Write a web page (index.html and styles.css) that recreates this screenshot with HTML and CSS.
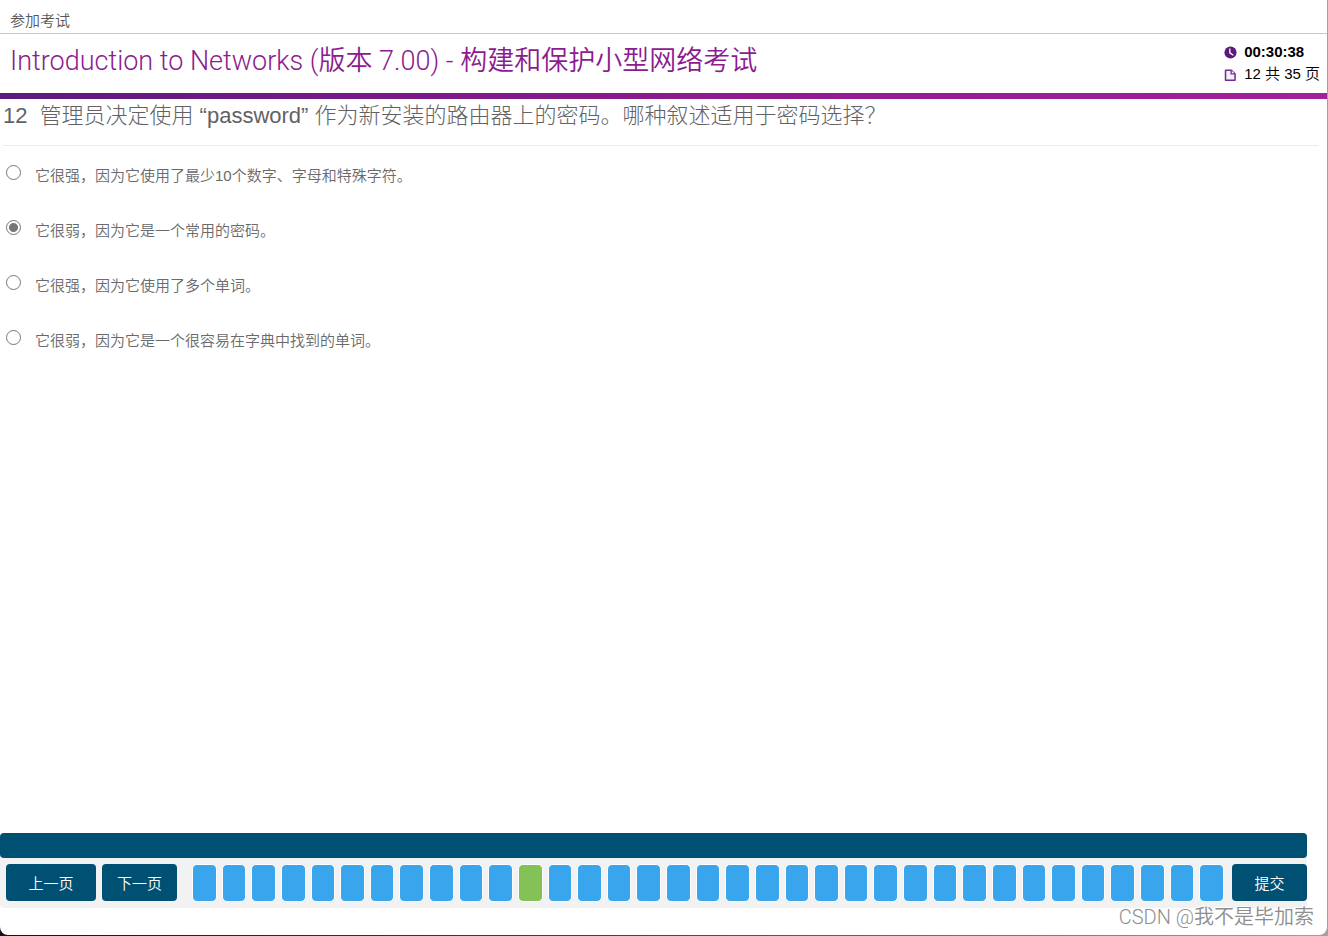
FILE: index.html
```
<!DOCTYPE html>
<html lang="zh-CN">
<head>
<meta charset="utf-8">
<title>参加考试</title>
<link rel="stylesheet" href="styles.css">
</head>
<body>
<div class="window">
  <div class="topbar">参加考试</div>
  <header class="header">
    <h1 class="title">Introduction to Networks (版本 7.00) - 构建和保护小型网络考试</h1>
    <div class="status">
      <div class="status-row status-time">
        <svg class="icon" viewBox="0 0 12 12" aria-hidden="true"><circle cx="6" cy="6" r="5.6" fill="#5c1a78"/><path d="M5.4 2.2V6.3L8.6 8.6" fill="none" stroke="#fff" stroke-width="1.2"/></svg>
        <span>00:30:38</span>
      </div>
      <div class="status-row">
        <svg class="icon" viewBox="0 0 12 12" aria-hidden="true"><path d="M1.4 2H6.6L10.2 5.4V11.3H1.4Z" fill="#f4eef7" stroke="#752a92" stroke-width="1.4" stroke-linejoin="round"/><path d="M6.6 2V5.4H10.2" fill="#fff" stroke="#752a92" stroke-width="1.2"/></svg>
        <span>12 共 35 页</span>
      </div>
    </div>
  </header>
  <main class="main">
    <h2 class="question"><span class="number">12</span><span>管理员决定使用 “password” 作为新安装的路由器上的密码。哪种叙述适用于密码选择？</span></h2>
    <form class="options">
      <label class="option"><input class="radio" type="radio" name="answer"><span>它很强，因为它使用了最少10个数字、字母和特殊字符。</span></label>
      <label class="option"><input class="radio" type="radio" name="answer" checked><span>它很弱，因为它是一个常用的密码。</span></label>
      <label class="option"><input class="radio" type="radio" name="answer"><span>它很强，因为它使用了多个单词。</span></label>
      <label class="option"><input class="radio" type="radio" name="answer"><span>它很弱，因为它是一个很容易在字典中找到的单词。</span></label>
    </form>
  </main>
  <footer class="footer">
    <div class="strip"></div>
    <nav class="pager">
      <button class="button button-wide" type="button">上一页</button>
      <button class="button" type="button">下一页</button>
      <div class="pages" id="pages"></div>
      <button class="button" type="button">提交</button>
    </nav>
  </footer>
  <div class="watermark">CSDN @我不是毕加索</div>
</div>
<script src="pages.js"></script>
</body>
</html>
```
FILE: pages.js
```
const pages = document.getElementById("pages");
for (let n = 1; n <= 35; n++) {
  const page = document.createElement("button");
  page.type = "button";
  page.className = n === 12 ? "page page-current" : "page";
  page.setAttribute("aria-label", String(n));
  pages.append(page);
}
```
FILE: styles.css
```
* {
  box-sizing: border-box;
}

body {
  margin: 0;
  padding: 0 1px 1px 0;
  min-height: 100vh;
  display: flex;
  background: linear-gradient(90deg, #10131f 0, #4a4650 50%, #a99ca8 100%);
  font-family: "Liberation Sans", "Noto Sans CJK SC DemiLight", "Noto Sans CJK SC", sans-serif;
  font-size: 15px;
  color: #58585b;
}

.window {
  position: relative;
  flex: 1;
  display: flex;
  flex-direction: column;
  background: #fff;
  border-radius: 0 0 8px 8px;
}

.topbar {
  height: 34px;
  padding: 9px 10px 0;
  border-bottom: 1px solid #c8c8ca;
  line-height: 24px;
}

.header {
  display: flex;
  justify-content: space-between;
  align-items: flex-start;
  height: 65px;
  padding: 7px 7px 0 10px;
  border-bottom: 6px solid;
  border-image: linear-gradient(90deg, #5c1a7e, #8c1b8c 50%, #a3219b) 1;
}

.title {
  margin: 0;
  font-family: Roboto, "Noto Sans CJK SC DemiLight", "Noto Sans CJK SC", sans-serif;
  font-size: 27px;
  font-weight: 300;
  line-height: 40px;
  color: #8c1b90;
}

.status {
  color: #000;
}

.status-row {
  display: flex;
  align-items: center;
  gap: 7px;
  height: 22px;
  line-height: 22px;
}

.status-time {
  font-weight: 700;
}

.icon {
  width: 13px;
  height: 13px;
}

.main {
  flex: 1;
  padding: 0 9px 0 3px;
}

.question {
  display: flex;
  gap: 12px;
  margin: 0;
  height: 47px;
  border-bottom: 1px solid #ebebec;
  font-family: "Liberation Sans", "Noto Sans CJK SC Light", "Noto Sans CJK SC", sans-serif;
  font-size: 22px;
  font-weight: 300;
  line-height: 33px;
  color: #626265;
}

.options {
  display: flex;
  flex-direction: column;
  gap: 33px;
  padding: 19px 3px 0;
  color: #6a6a6d;
}

.option {
  display: flex;
  gap: 14px;
  line-height: 22px;
}

.radio {
  appearance: none;
  width: 15px;
  height: 15px;
  margin: 0;
  border: 1px solid #767676;
  border-radius: 50%;
  background: #fff;
}

.radio:checked {
  background: radial-gradient(circle, #767676 4px, #fff 5px);
}

.footer {
  margin: 0 20px 27px 0;
  border-radius: 4px;
  background: #f2f2f2;
}

.strip {
  height: 25px;
  border-radius: 4px;
  background: #005073;
}

.pager {
  display: flex;
  align-items: flex-start;
  gap: 6px;
  padding: 6px 0 6px 6px;
}

.button {
  width: 75px;
  height: 37px;
  padding: 0;
  border: 0;
  border-radius: 4px;
  background: #005073;
  color: #fff;
  font: inherit;
}

.button-wide {
  width: 90px;
}

.pages {
  flex: 1;
  display: grid;
  grid-template-columns: repeat(35, 1fr);
  gap: 5px;
  padding: 0 2px 0 9px;
}

.page {
  height: 38px;
  padding: 0;
  border: 1px solid #fff;
  border-radius: 5px;
  background: #39a5ec;
}

.page-current {
  background: #84c257;
}

.watermark {
  position: absolute;
  right: 13px;
  bottom: 3px;
  font-family: Roboto, "Noto Sans CJK SC DemiLight", "Noto Sans CJK SC", sans-serif;
  font-size: 20px;
  font-weight: 300;
  line-height: 30px;
  color: #8e8e8e;
  text-shadow: -1px -1px 0 #fff;
}
```
